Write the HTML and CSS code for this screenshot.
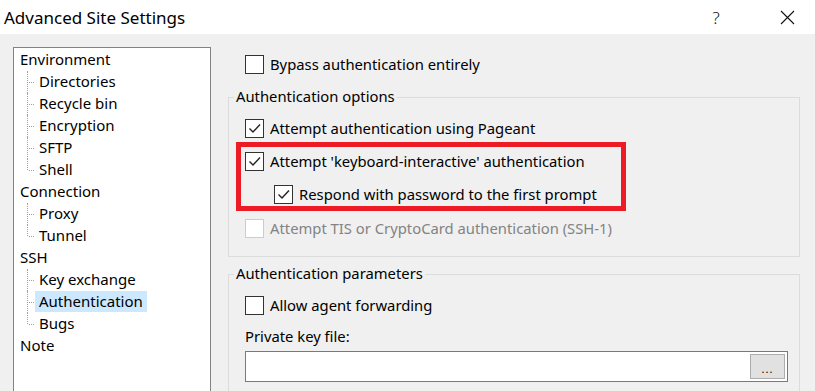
FILE: index.html
```html
<!DOCTYPE html>
<html lang="en">
<head>
    <meta charset="UTF-8">
    <title>Advanced Site Settings</title>
    <link rel="stylesheet" href="styles.css">
</head>
<body>

<div class="titlebar">
    <span class="title">Advanced Site Settings</span>
    <span class="tb-btn help">?</span>
    <span class="tb-btn close">
        <svg width="15" height="15" viewBox="0 0 15 15"><path d="M1 1 L14 14 M14 1 L1 14" stroke="#111" stroke-width="1.1" fill="none"/></svg>
    </span>
</div>

<div class="main">
    <div class="tree-panel">
        <ul class="tree">
            <li>
                <div class="row"><span class="label">Environment</span></div>
                <ul class="children">
                    <li class="row child"><span class="label">Directories</span></li>
                    <li class="row child"><span class="label">Recycle bin</span></li>
                    <li class="row child"><span class="label">Encryption</span></li>
                    <li class="row child"><span class="label">SFTP</span></li>
                    <li class="row child last"><span class="label">Shell</span></li>
                </ul>
            </li>
            <li>
                <div class="row"><span class="label">Connection</span></div>
                <ul class="children">
                    <li class="row child"><span class="label">Proxy</span></li>
                    <li class="row child last"><span class="label">Tunnel</span></li>
                </ul>
            </li>
            <li>
                <div class="row"><span class="label">SSH</span></div>
                <ul class="children">
                    <li class="row child"><span class="label">Key exchange</span></li>
                    <li class="row child"><span class="label selected">Authentication</span></li>
                    <li class="row child last"><span class="label">Bugs</span></li>
                </ul>
            </li>
            <li>
                <div class="row"><span class="label">Note</span></div>
            </li>
        </ul>
    </div>

    <div class="pane">
        <label class="check-row bypass">
            <span class="box"></span>
            <span class="text">Bypass authentication entirely</span>
        </label>

        <div class="group options">
            <div class="group-title">Authentication options</div>

            <label class="check-row pageant">
                <span class="box checked"><svg width="17" height="17" viewBox="0 0 17 17"><path d="M3.5 8.5 L7 12 L14 4.5" stroke="#222" stroke-width="1.4" fill="none"/></svg></span>
                <span class="text">Attempt authentication using Pageant</span>
            </label>

            <!-- red annotation frame -->
            <div class="highlight">
                <label class="check-row">
                    <span class="box checked"><svg width="17" height="17" viewBox="0 0 17 17"><path d="M3.5 8.5 L7 12 L14 4.5" stroke="#222" stroke-width="1.4" fill="none"/></svg></span>
                    <span class="text">Attempt 'keyboard-interactive' authentication</span>
                </label>
                <label class="check-row respond">
                    <span class="box checked"><svg width="17" height="17" viewBox="0 0 17 17"><path d="M3.5 8.5 L7 12 L14 4.5" stroke="#222" stroke-width="1.4" fill="none"/></svg></span>
                    <span class="text">Respond with password to the first prompt</span>
                </label>
            </div>

            <label class="check-row disabled tis">
                <span class="box"></span>
                <span class="text">Attempt TIS or CryptoCard authentication (SSH-1)</span>
            </label>
        </div>

        <div class="group params">
            <div class="group-title">Authentication parameters</div>

            <label class="check-row agent">
                <span class="box"></span>
                <span class="text">Allow agent forwarding</span>
            </label>

            <div class="field-label">Private key file:</div>
            <div class="file-input">
                <span class="browse">...</span>
            </div>
        </div>
    </div>
</div>

</body>
</html>
```

FILE: styles.css
```css
html, body {
    height: 100%;
}

body {
    margin: 0;
    background-color: #f0f0f0;
    font-family: 'Noto Sans', 'Liberation Sans', sans-serif;
    font-size: 14.8px;
    color: #000;
    overflow: hidden;
}

/* Title bar */
.titlebar {
    height: 34px;
    background-color: #ffffff;
    display: flex;
    align-items: center;
}

.title {
    font-size: 17px;
    margin-left: 4px;
    color: #000;
}

.tb-btn {
    display: flex;
    justify-content: center;
    align-items: center;
    width: 58px;
    height: 34px;
}

.help {
    margin-left: auto;
    margin-right: 13px;
    font-size: 17px;
    font-weight: 300;
    color: #111;
}

.close {
    margin-right: -1px;
}

/* Layout */
.main {
    display: flex;
    height: 357px;
    overflow: hidden;
}

/* Tree */
.tree-panel {
    width: 196px;
    height: 400px;
    margin: 13px 0 0 13px;
    border: 1px solid #828282;
    background-color: #ffffff;
    flex-shrink: 0;
    font-size: 15px;
}

.tree, .children {
    list-style: none;
    margin: 0;
    padding: 0;
}

.tree {
    padding-top: 1px;
}

.row {
    height: 22px;
    line-height: 21px;
    padding-left: 6px;
    white-space: nowrap;
}

.row.child {
    position: relative;
    padding-left: 21px;
}

/* dotted connector lines */
.row.child::before {
    content: '';
    position: absolute;
    left: 13px;
    top: 0;
    bottom: 0;
    border-left: 1px dotted #a0a0a0;
}

.row.child.last::before {
    bottom: 11px;
}

.row.child::after {
    content: '';
    position: absolute;
    left: 15px;
    top: 11px;
    width: 5px;
    border-top: 1px dotted #a0a0a0;
}

.label {
    display: inline-block;
    height: 21px;
    line-height: 20px;
}

.child .label {
    padding: 0 4px;
}

.label.selected {
    background-color: #cce8ff;
}

/* Right pane */
.pane {
    width: 572px;
    margin-left: 17px;
    display: flex;
    flex-direction: column;
}

.check-row {
    display: flex;
    align-items: center;
    height: 19px;
    white-space: nowrap;
}

.check-row .text {
    line-height: 18px;
    margin-top: -1px;
}

.box {
    width: 17px;
    height: 17px;
    border: 1px solid #333333;
    background-color: #ffffff;
    margin-right: 6px;
    flex-shrink: 0;
}

.box svg {
    display: block;
}

.check-row.disabled .box {
    border-color: #cccccc;
}

.check-row.disabled .text {
    color: #838383;
}

.bypass {
    margin-top: 21px;
    margin-left: 17px;
}

/* Group boxes */
.group {
    border: 1px solid #dcdcdc;
    padding: 0 0 18px 16px;
}

.group-title {
    width: fit-content;
    margin: -11px 0 0 -11px;
    padding: 0 2px;
    line-height: 19px;
    background-color: #f0f0f0;
}

.options {
    margin-top: 23px;
}

.pageant {
    margin-top: 13px;
}

.highlight {
    width: 376px;
    margin: 4px 0 0 -9px;
    padding: 5px 0 2px 4px;
    border: 5px solid #ed1c24;
}

.respond {
    margin-top: 14px;
    margin-left: 29px;
}

.tis {
    margin-top: 8px;
}

.params {
    margin-top: 17px;
    padding-bottom: 40px;
}

.agent {
    margin-top: 13px;
}

.field-label {
    margin-top: 12px;
    line-height: 19px;
}

.file-input {
    width: 541px;
    height: 29px;
    margin-top: 5px;
    border: 1px solid #7a7a7a;
    background-color: #ffffff;
    display: flex;
    justify-content: flex-end;
    align-items: center;
}

.browse {
    width: 33px;
    height: 23px;
    margin-right: 2px;
    border: 1px solid #adadad;
    background-color: #e1e1e1;
    font-size: 11px;
    line-height: 28px;
    text-align: center;
    letter-spacing: 1px;
    overflow: hidden;
}
```
